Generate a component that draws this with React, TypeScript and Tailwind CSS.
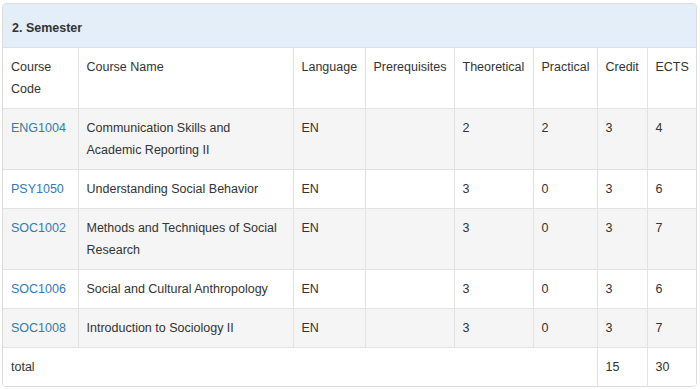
type Course = {
  code: string;
  name: string;
  lang: string;
  prereq: string;
  theo: number;
  prac: number;
  credit: number;
  ects: number;
};

const courses: Course[] = [
  { code: "ENG1004", name: "Communication Skills and Academic Reporting II", lang: "EN", prereq: "", theo: 2, prac: 2, credit: 3, ects: 4 },
  { code: "PSY1050", name: "Understanding Social Behavior", lang: "EN", prereq: "", theo: 3, prac: 0, credit: 3, ects: 6 },
  { code: "SOC1002", name: "Methods and Techniques of Social Research", lang: "EN", prereq: "", theo: 3, prac: 0, credit: 3, ects: 7 },
  { code: "SOC1006", name: "Social and Cultural Anthropology", lang: "EN", prereq: "", theo: 3, prac: 0, credit: 3, ects: 6 },
  { code: "SOC1008", name: "Introduction to Sociology II", lang: "EN", prereq: "", theo: 3, prac: 0, credit: 3, ects: 7 },
];

const headers = ["Course Code", "Course Name", "Language", "Prerequisites", "Theoretical", "Practical", "Credit", "ECTS"];

const cell = "border-r border-b border-[#e2e2e2] px-2 py-2 align-top text-left font-normal";
const lastCell = "border-b border-[#e2e2e2] px-2 py-2 align-top text-left font-normal";

export default function App() {
  const totalCredit = courses.reduce((s, c) => s + c.credit, 0);
  const totalEcts = courses.reduce((s, c) => s + c.ects, 0);

  return (
    <div className="w-[700px] h-[389px] bg-white pt-[3px] pl-[2px] pr-[3px] font-['Liberation_Sans',Arial,sans-serif] text-[12.5px] leading-[22px] text-[#333]">
      <div className="border border-[#dcdcdc] rounded-[4px] overflow-hidden">
        <div className="h-[44px] flex items-center pt-[5px] px-[9px] bg-[#e3eef9] border-b border-[#d6e2ee] font-bold">
          2. Semester
        </div>
        <table className="w-full table-fixed border-collapse">
          <colgroup>
            <col className="w-[75px]" />
            <col className="w-[215px]" />
            <col className="w-[72px]" />
            <col className="w-[89px]" />
            <col className="w-[79px]" />
            <col className="w-[64px]" />
            <col className="w-[50px]" />
            <col />
          </colgroup>
          <thead>
            <tr className="bg-white">
              {headers.map((h, i) => (
                <th key={h} className={i === headers.length - 1 ? lastCell : cell}>
                  {h === "Course Code" ? (
                    <>
                      Course
                      <br />
                      Code
                    </>
                  ) : (
                    h
                  )}
                </th>
              ))}
            </tr>
          </thead>
          <tbody>
            {courses.map((c, i) => (
              <tr key={c.code} className={i % 2 === 0 ? "bg-[#f5f5f5]" : "bg-white"}>
                <td className={cell}>
                  <a href="#" className="text-[#337ab7]">
                    {c.code}
                  </a>
                </td>
                <td className={cell}>{c.name}</td>
                <td className={cell}>{c.lang}</td>
                <td className={cell}>{c.prereq}</td>
                <td className={cell}>{c.theo}</td>
                <td className={cell}>{c.prac}</td>
                <td className={cell}>{c.credit}</td>
                <td className={lastCell}>{c.ects}</td>
              </tr>
            ))}
            <tr className="bg-white">
              <td colSpan={6} className="border-r border-[#e2e2e2] px-2 py-2 align-top">
                total
              </td>
              <td className="border-r border-[#e2e2e2] px-2 py-2 align-top">{totalCredit}</td>
              <td className="px-2 py-2 align-top">{totalEcts}</td>
            </tr>
          </tbody>
        </table>
      </div>
    </div>
  );
}
